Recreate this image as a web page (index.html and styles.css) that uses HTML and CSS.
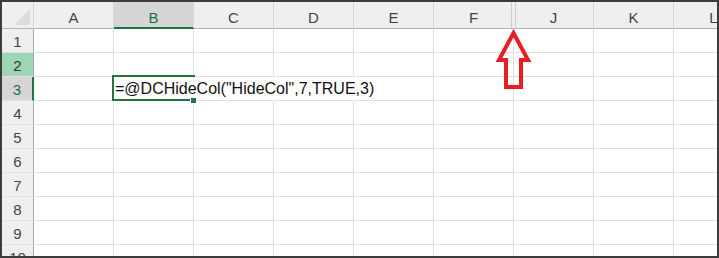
FILE: index.html
```html
<!DOCTYPE html>
<html lang="en">
<head>
  <meta charset="UTF-8">
  <title>Hidden columns</title>
  <link rel="stylesheet" href="styles.css">
</head>
<body>
  <div class="sheet">
    <div class="grid">
      <div class="corner">
        <svg width="31" height="26" viewBox="0 0 31 26"><polygon points="12,23 28,7 28,23" fill="#dcdcdc"/></svg>
      </div>
      <div class="col-head">A</div>
      <div class="col-head selected">B</div>
      <div class="col-head">C</div>
      <div class="col-head">D</div>
      <div class="col-head">E</div>
      <div class="col-head before-hidden">F</div>
      <div class="col-head after-hidden">J</div>
      <div class="col-head">K</div>
      <div class="col-head">L</div>

      <div class="row-head">1</div>
      <div class="cell"></div><div class="cell"></div><div class="cell"></div><div class="cell"></div><div class="cell"></div><div class="cell"></div><div class="cell"></div><div class="cell"></div><div class="cell"></div>

      <div class="row-head hover">2</div>
      <div class="cell"></div><div class="cell"></div><div class="cell"></div><div class="cell"></div><div class="cell"></div><div class="cell"></div><div class="cell"></div><div class="cell"></div><div class="cell"></div>

      <div class="row-head current">3</div>
      <div class="cell"></div>
      <div class="cell active">=@DCHideCol("HideCol",7,TRUE,3)<span class="handle"></span></div>
      <div class="cell spill"></div><div class="cell spill"></div><div class="cell"></div><div class="cell"></div><div class="cell"></div><div class="cell"></div><div class="cell"></div>

      <div class="row-head">4</div>
      <div class="cell"></div><div class="cell"></div><div class="cell"></div><div class="cell"></div><div class="cell"></div><div class="cell"></div><div class="cell"></div><div class="cell"></div><div class="cell"></div>

      <div class="row-head">5</div>
      <div class="cell"></div><div class="cell"></div><div class="cell"></div><div class="cell"></div><div class="cell"></div><div class="cell"></div><div class="cell"></div><div class="cell"></div><div class="cell"></div>

      <div class="row-head">6</div>
      <div class="cell"></div><div class="cell"></div><div class="cell"></div><div class="cell"></div><div class="cell"></div><div class="cell"></div><div class="cell"></div><div class="cell"></div><div class="cell"></div>

      <div class="row-head">7</div>
      <div class="cell"></div><div class="cell"></div><div class="cell"></div><div class="cell"></div><div class="cell"></div><div class="cell"></div><div class="cell"></div><div class="cell"></div><div class="cell"></div>

      <div class="row-head">8</div>
      <div class="cell"></div><div class="cell"></div><div class="cell"></div><div class="cell"></div><div class="cell"></div><div class="cell"></div><div class="cell"></div><div class="cell"></div><div class="cell"></div>

      <div class="row-head">9</div>
      <div class="cell"></div><div class="cell"></div><div class="cell"></div><div class="cell"></div><div class="cell"></div><div class="cell"></div><div class="cell"></div><div class="cell"></div><div class="cell"></div>

      <div class="row-head">10</div>
      <div class="cell"></div><div class="cell"></div><div class="cell"></div><div class="cell"></div><div class="cell"></div><div class="cell"></div><div class="cell"></div><div class="cell"></div><div class="cell"></div>
    </div>

    <!-- red callout pointing at the hidden columns G:I -->
    <svg class="arrow" width="715" height="254" viewBox="2 2 715 254">
      <polygon points="513.5,33 499,60 506,60 506,87 521,87 521,60 528,60" fill="none" stroke="#ec1c24" stroke-width="4" stroke-linejoin="miter"/>
    </svg>
  </div>
</body>
</html>
```

FILE: styles.css
```css
body {
  margin: 0;
  background-color: #ffffff;
  font-family: "Liberation Sans", Arial, sans-serif;
}
.sheet {
  position: relative;
  width: 719px;
  height: 258px;
  box-sizing: border-box;
  border: 2px solid #3c3c3c;
  overflow: hidden;
}
.grid {
  display: grid;
  grid-template-columns: 32px repeat(9, 80px);
  grid-template-rows: 27px repeat(10, 24px);
}
.grid > div {
  box-sizing: border-box;
}
.corner {
  background-color: #efefef;
  border-right: 1px solid #d4d4d4;
  border-bottom: 1px solid #b4b4b4;
}
.corner svg {
  display: block;
}
.col-head {
  display: flex;
  justify-content: center;
  align-items: flex-end;
  padding-bottom: 2px;
  background-color: #efefef;
  border-right: 1px solid #d9d9d9;
  border-bottom: 1px solid #b4b4b4;
  color: #444444;
  font-size: 15px;
  line-height: 17px;
}
.col-head.selected {
  background-color: #d6d6d6;
  border-bottom: 2px solid #217346;
  padding-bottom: 1px;
  color: #1d6f42;
}
.col-head.before-hidden {
  border-right-color: #efefef;
  box-shadow: inset -1px 0 0 #efefef, inset -2px 0 0 #cfcfcf;
}
.col-head.after-hidden {
  box-shadow: inset 1px 0 0 #efefef, inset 2px 0 0 #cfcfcf;
}
.row-head {
  display: flex;
  justify-content: center;
  align-items: flex-end;
  padding-bottom: 2px;
  background-color: #efefef;
  border-right: 1px solid #a8a8a8;
  border-bottom: 1px solid #e2e2e2;
  color: #444444;
  font-size: 15px;
  line-height: 17px;
}
.row-head.hover {
  background-color: #9fd5b7;
  color: #333333;
}
.row-head.current {
  background-color: #d6d6d6;
  border-right: 2px solid #217346;
  color: #1d6f42;
}
.cell {
  display: flex;
  align-items: flex-end;
  padding: 0 0 2px 1px;
  border-right: 1px solid #e1e1e1;
  border-bottom: 1px solid #e1e1e1;
  color: #111111;
  font-size: 16px;
  line-height: 18px;
  white-space: nowrap;
}
.cell.spill {
  border-right-color: #ffffff;
}
.cell.active {
  position: relative;
  z-index: 1;
  border-right-color: #ffffff;
}
.cell.active::before {
  content: "";
  position: absolute;
  top: -2px;
  left: -2px;
  right: -2px;
  bottom: -1px;
  border: 2px solid #217346;
  border-right: none;
}
.handle {
  position: absolute;
  right: -4px;
  bottom: -4px;
  width: 7px;
  height: 7px;
  box-sizing: border-box;
  background-color: #217346;
  border: 1px solid #ffffff;
}
.arrow {
  position: absolute;
  top: 0;
  left: 0;
  z-index: 2;
}
```
